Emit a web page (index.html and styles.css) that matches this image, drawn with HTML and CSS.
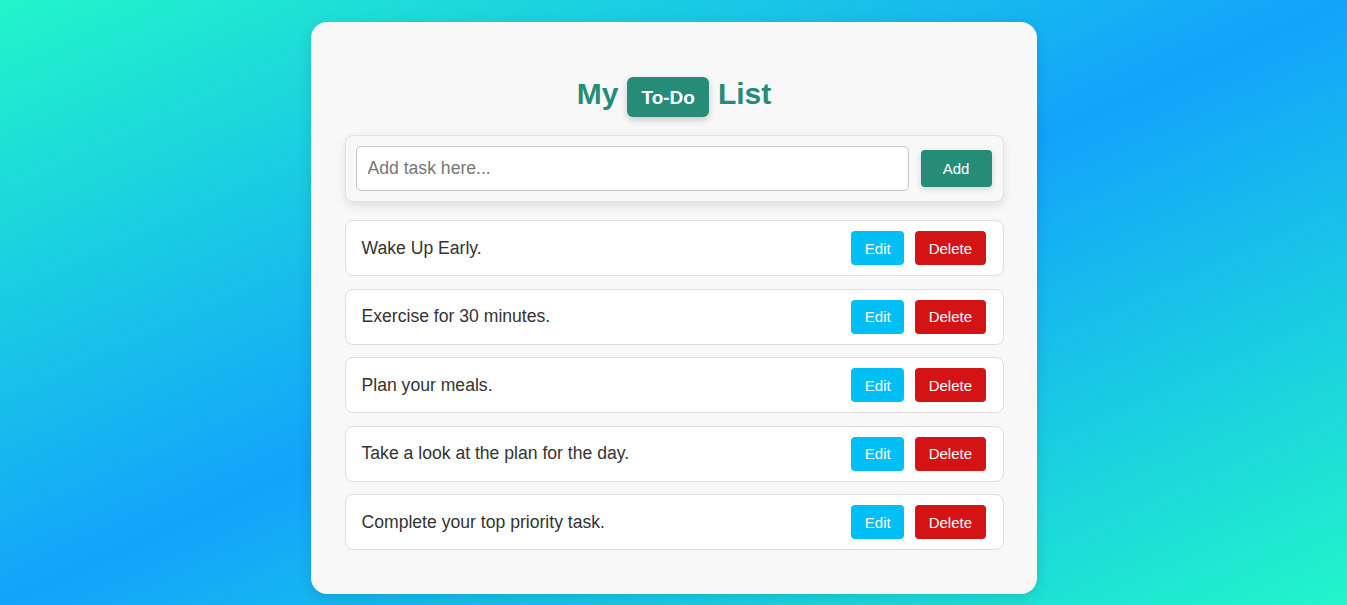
FILE: index.html
```html
<!DOCTYPE html>
<html lang="en">
<head>
<meta charset="UTF-8">
<title>To-Do List</title>
<link rel="stylesheet" href="styles.css">
</head>
<body>
  <main class="card">
    <h1 class="title"><span class="word">My</span><span class="badge">To-Do</span><span class="word">List</span></h1>
    <div class="add-row">
      <input class="task-input" type="text" placeholder="Add task here...">
      <button class="btn btn-add">Add</button>
    </div>
    <ul class="tasks">
      <li class="task"><span class="task-text">Wake Up Early.</span><div class="actions"><button class="btn btn-edit">Edit</button><button class="btn btn-delete">Delete</button></div></li>
      <li class="task"><span class="task-text">Exercise for 30 minutes.</span><div class="actions"><button class="btn btn-edit">Edit</button><button class="btn btn-delete">Delete</button></div></li>
      <li class="task"><span class="task-text">Plan your meals.</span><div class="actions"><button class="btn btn-edit">Edit</button><button class="btn btn-delete">Delete</button></div></li>
      <li class="task"><span class="task-text">Take a look at the plan for the day.</span><div class="actions"><button class="btn btn-edit">Edit</button><button class="btn btn-delete">Delete</button></div></li>
      <li class="task"><span class="task-text">Complete your top priority task.</span><div class="actions"><button class="btn btn-edit">Edit</button><button class="btn btn-delete">Delete</button></div></li>
    </ul>
  </main>
</body>
</html>
```

FILE: styles.css
```css
* { box-sizing: border-box; }
html, body { height: 100%; }
body {
  margin: 0;
  font-family: "Liberation Sans", Arial, sans-serif;
  background: linear-gradient(to bottom right, #22f5c9 0%, #12a3fb 50%, #22f5c9 100%);
  overflow: hidden;
}
.card {
  width: 726px;
  margin: 22px auto 0;
  background: #f8f8f8;
  border-radius: 16px;
  padding: 55px 33px 44px 34px;
  box-shadow: 0 4px 14px rgba(0, 0, 0, 0.12);
}
.title {
  margin: 0 0 18px;
  height: 40px;
  display: flex;
  justify-content: center;
  align-items: flex-start;
  gap: 9px;
  font-size: 30px;
  line-height: 33px;
  font-weight: bold;
  color: #268c77;
}
.badge {
  display: inline-flex;
  align-items: center;
  height: 40px;
  padding: 0 14px;
  background: #268c77;
  color: #fff;
  font-size: 19px;
  line-height: 1;
  border-radius: 6px;
  box-shadow: 0 3px 7px rgba(0, 0, 0, 0.2);
}
.add-row {
  display: flex;
  align-items: center;
  gap: 12px;
  padding: 10px 11px 10px 10px;
  border: 1px solid #e3e3e3;
  border-radius: 8px;
  background: #f8f8f8;
  box-shadow: 0 4px 10px rgba(0, 0, 0, 0.1);
  margin-bottom: 18px;
}
.task-input {
  flex: 1;
  height: 45px;
  border: 1px solid #c8c8c8;
  border-radius: 5px;
  padding: 0 11px;
  font-family: inherit;
  font-size: 17.6px;
  color: #333;
  background: #fff;
  outline: none;
}
.task-input::placeholder { color: #777; }
.btn {
  border: none;
  color: #fff;
  font-family: inherit;
  font-size: 15px;
  border-radius: 4px;
  cursor: pointer;
}
.btn-add {
  width: 71px;
  height: 37px;
  background: #268c77;
  box-shadow: 0 2px 6px rgba(0, 0, 0, 0.15);
}
.tasks {
  list-style: none;
  margin: 0;
  padding: 0;
  display: flex;
  flex-direction: column;
  gap: 12.5px;
}
.task {
  height: 56px;
  display: flex;
  align-items: center;
  justify-content: space-between;
  padding: 0 17px 0 16px;
  background: #fff;
  border: 1px solid #dedede;
  border-radius: 8px;
}
.task-text {
  font-size: 17.6px;
  color: #333;
}
.actions {
  display: flex;
  gap: 11px;
}
.btn-edit {
  height: 34px;
  padding: 0 13.5px;
  background: #00bff5;
}
.btn-delete {
  height: 34px;
  padding: 0 13.5px;
  background: #d41414;
}
```
